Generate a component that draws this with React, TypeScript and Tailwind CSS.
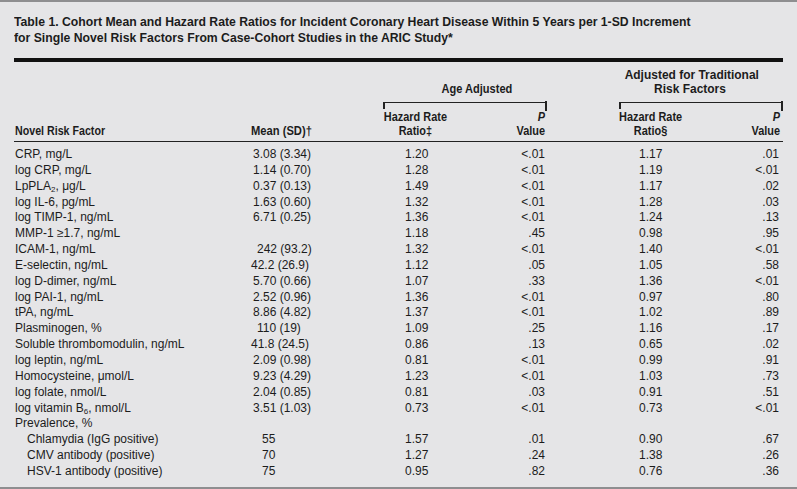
type Row = {
  name: React.ReactNode;
  mean?: string;
  meanPad?: string;
  hr1?: string;
  p1?: string;
  hr2?: string;
  p2?: string;
  indent?: boolean;
};

const rows: Row[] = [
  { name: 'CRP, mg/L', mean: '3.08 (3.34)', hr1: '1.20', p1: '<.01', hr2: '1.17', p2: '.01' },
  { name: 'log CRP, mg/L', mean: '1.14 (0.70)', hr1: '1.28', p1: '<.01', hr2: '1.19', p2: '<.01' },
  {
    name: (
      <>
        LpPLA<sub className="text-[8px] align-baseline relative top-[2px]">2</sub>, μg/L
      </>
    ),
    mean: '0.37 (0.13)',
    hr1: '1.49',
    p1: '<.01',
    hr2: '1.17',
    p2: '.02',
  },
  { name: 'log IL-6, pg/mL', mean: '1.63 (0.60)', hr1: '1.32', p1: '<.01', hr2: '1.28', p2: '.03' },
  { name: 'log TIMP-1, ng/mL', mean: '6.71 (0.25)', hr1: '1.36', p1: '<.01', hr2: '1.24', p2: '.13' },
  { name: 'MMP-1 ≥1.7, ng/mL', mean: '', hr1: '1.18', p1: '.45', hr2: '0.98', p2: '.95' },
  { name: 'ICAM-1, ng/mL', mean: '242 (93.2)', meanPad: 'pl-[6px]', hr1: '1.32', p1: '<.01', hr2: '1.40', p2: '<.01' },
  { name: 'E-selectin, ng/mL', mean: '42.2 (26.9)', meanPad: 'pl-0', hr1: '1.12', p1: '.05', hr2: '1.05', p2: '.58' },
  { name: 'log D-dimer, ng/mL', mean: '5.70 (0.66)', hr1: '1.07', p1: '.33', hr2: '1.36', p2: '<.01' },
  { name: 'log PAI-1, ng/mL', mean: '2.52 (0.96)', hr1: '1.36', p1: '<.01', hr2: '0.97', p2: '.80' },
  { name: 'tPA, ng/mL', mean: '8.86 (4.82)', hr1: '1.37', p1: '<.01', hr2: '1.02', p2: '.89' },
  { name: 'Plasminogen, %', mean: '110 (19)', meanPad: 'pl-[6px]', hr1: '1.09', p1: '.25', hr2: '1.16', p2: '.17' },
  { name: 'Soluble thrombomodulin, ng/mL', mean: '41.8 (24.5)', meanPad: 'pl-0', hr1: '0.86', p1: '.13', hr2: '0.65', p2: '.02' },
  { name: 'log leptin, ng/mL', mean: '2.09 (0.98)', hr1: '0.81', p1: '<.01', hr2: '0.99', p2: '.91' },
  { name: 'Homocysteine, μmol/L', mean: '9.23 (4.29)', hr1: '1.23', p1: '<.01', hr2: '1.03', p2: '.73' },
  { name: 'log folate, nmol/L', mean: '2.04 (0.85)', hr1: '0.81', p1: '.03', hr2: '0.91', p2: '.51' },
  {
    name: (
      <>
        log vitamin B<sub className="text-[8px] align-baseline relative top-[2px]">6</sub>, nmol/L
      </>
    ),
    mean: '3.51 (1.03)',
    hr1: '0.73',
    p1: '<.01',
    hr2: '0.73',
    p2: '<.01',
  },
  { name: 'Prevalence, %' },
  { name: 'Chlamydia (IgG positive)', mean: '55', meanPad: 'pl-[11px]', hr1: '1.57', p1: '.01', hr2: '0.90', p2: '.67', indent: true },
  { name: 'CMV antibody (positive)', mean: '70', meanPad: 'pl-[11px]', hr1: '1.27', p1: '.24', hr2: '1.38', p2: '.26', indent: true },
  { name: 'HSV-1 antibody (positive)', mean: '75', meanPad: 'pl-[11px]', hr1: '0.95', p1: '.82', hr2: '0.76', p2: '.36', indent: true },
];

const cols = 'grid grid-cols-[237px_132px_80px_84px_72px_80px_84px]';

function Bracket() {
  return (
    <div className="flex justify-between items-start border-t border-[#222] h-[8px]">
      <div className="w-[2px] h-[7px] bg-[#222] -mt-[1px]" />
      <div className="w-[2px] h-[10px] bg-[#222] -mt-[2px]" />
    </div>
  );
}

export default function App() {
  return (
    <div
      className="w-[797px] h-[489px] bg-[#e5e5e7] text-[#1c1c1c] border-t-2 border-b-2 border-[#8e8e90] px-[14px] overflow-hidden"
      style={{ fontFamily: '"Liberation Sans", Arial, sans-serif' }}
    >
      {/* Title */}
      <div className="pt-[12px] text-[13px] leading-[16px] font-bold whitespace-nowrap">
        <p className="scale-x-[0.94] origin-left">
          Table 1. Cohort Mean and Hazard Rate Ratios for Incident Coronary Heart Disease Within 5 Years per 1-SD Increment
        </p>
        <p className="scale-x-[0.94] origin-left">
          for Single Novel Risk Factors From Case-Cohort Studies in the ARIC Study*
        </p>
      </div>

      <div className="mt-[12px] h-[4px] bg-[#111]" />

      {/* Column headers */}
      <div className="text-[13px] leading-[14px] font-bold whitespace-nowrap">
        <div className={`${cols} mt-[6px] h-[28px] items-end`}>
          <div />
          <div />
          <div className="col-span-2 text-right pr-[35px]">
            <span className="inline-block scale-x-[0.85] origin-right">Age Adjusted</span>
          </div>
          <div />
          <div className="col-span-2 pr-[22px] text-center">
            <div className="scale-x-[0.92] origin-center">
              <p>Adjusted for Traditional</p>
              <p>Risk Factors</p>
            </div>
          </div>
        </div>

        <div className={`${cols} mt-[6px]`}>
          <div />
          <div />
          <div className="col-span-2">
            <Bracket />
          </div>
          <div />
          <div className="col-span-2">
            <Bracket />
          </div>
        </div>

        <div className={`${cols} h-[28px] items-end`}>
          <div className="pl-[1px]">
            <span className="inline-block scale-x-[0.82] origin-left">Novel Risk Factor</span>
          </div>
          <div>
            <span className="inline-block scale-x-[0.86] origin-left">Mean (SD)†</span>
          </div>
          <div>
            <div className="inline-block text-center pl-[1px] scale-x-[0.84] origin-left">
              <p>Hazard Rate</p>
              <p>Ratio‡</p>
            </div>
          </div>
          <div className="text-right pr-[2px]">
            <div className="scale-x-[0.84] origin-right">
              <p className="italic">P</p>
              <p>Value</p>
            </div>
          </div>
          <div />
          <div>
            <div className="inline-block text-center scale-x-[0.84] origin-left">
              <p>Hazard Rate</p>
              <p>Ratio§</p>
            </div>
          </div>
          <div className="text-right pr-[3px]">
            <div className="scale-x-[0.84] origin-right">
              <p className="italic">P</p>
              <p>Value</p>
            </div>
          </div>
        </div>
      </div>

      <div className="mt-[3px] h-px bg-[#222]" />

      {/* Body rows */}
      <div className="pt-[5px] text-[12px]">
        {rows.map((r, i) => (
          <div key={i} className={`${cols} h-[15.85px] leading-[15.85px] whitespace-nowrap`}>
            <div className={r.indent ? 'pl-[13px]' : 'pl-[1px]'}>{r.name}</div>
            <div className={r.meanPad ?? 'pl-[2px]'}>{r.mean}</div>
            <div className="pl-[22px]">{r.hr1}</div>
            <div className="text-right pr-[2px]">{r.p1}</div>
            <div />
            <div className="pl-[20px]">{r.hr2}</div>
            <div className="text-right pr-[4px]">{r.p2}</div>
          </div>
        ))}
      </div>
    </div>
  );
}
